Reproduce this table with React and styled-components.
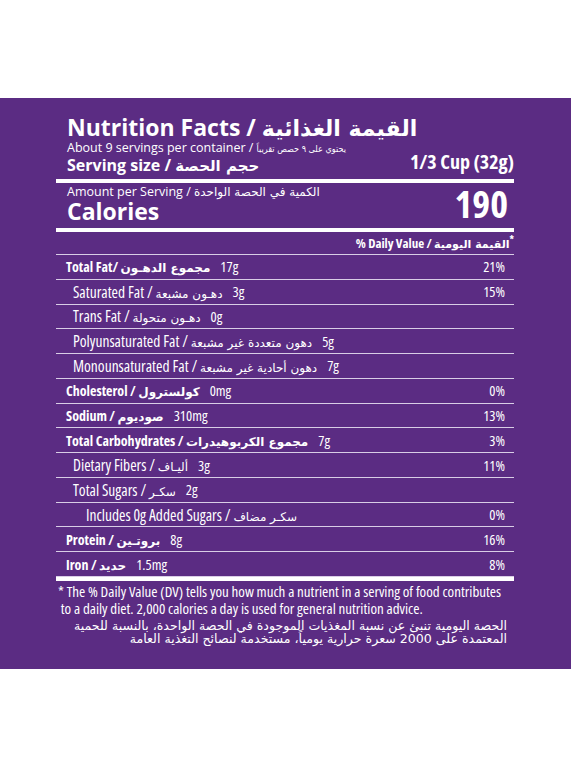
import styled, { createGlobalStyle } from "styled-components";

const GlobalStyle = createGlobalStyle`
  body {
    margin: 0;
    background: #ffffff;
  }
`;

const SANS = `"Open Sans", "Liberation Sans", sans-serif`;
const ARABIC = `"DejaVu Sans", sans-serif`;
const ARABIC_NARROW = `"DejaVu Sans Condensed", "DejaVu Sans", sans-serif`;

//---------- data --------
const rows = [
  { en: "Total Fat", ar: "مجموع الدهـون", amount: "17g", dv: "21%", bold: true, level: 0, tight: true },
  { en: "Saturated Fat", ar: "دهـون مشبعة", amount: "3g", dv: "15%", level: 1 },
  { en: "Trans Fat", ar: "دهـون متحولة", amount: "0g", level: 1 },
  { en: "Polyunsaturated Fat", ar: "دهون متعددة غير مشبعة", amount: "5g", level: 1 },
  { en: "Monounsaturated Fat", ar: "دهون أحادية غير مشبعة", amount: "7g", level: 1 },
  { en: "Cholesterol", ar: "كولسترول", amount: "0mg", dv: "0%", bold: true, level: 0 },
  { en: "Sodium", ar: "صوديوم", amount: "310mg", dv: "13%", bold: true, level: 0 },
  { en: "Total Carbohydrates", ar: "مجموع الكربوهيدرات", amount: "7g", dv: "3%", bold: true, level: 0 },
  { en: "Dietary Fibers", ar: "أليـاف", amount: "3g", dv: "11%", level: 1 },
  { en: "Total Sugars", ar: "سكـر", amount: "2g", level: 1 },
  { en: "Includes 0g Added Sugars", ar: "سكـر مضاف", dv: "0%", level: 2 },
  { en: "Protein", ar: "بروتـين", amount: "8g", dv: "16%", bold: true, level: 0 },
  { en: "Iron", ar: "حديد", amount: "1.5mg", dv: "8%", bold: true, level: 0 },
];

const indent = [10, 17, 30];

const App = () => {
  return (
    <>
      <GlobalStyle />
      <Panel>
        <Label>
          <Title>
            Nutrition Facts / <Ar $size={22}>القيمة الغذائية</Ar>
          </Title>
          <Serving>
            <div>
              <Small>
                About 9 servings per container /{" "}
                <Ar $size={9} $narrow>
                  يحتوي على ٩ حصص تقريباً
                </Ar>
              </Small>
              <ServingSize>
                Serving size / <Ar $size={15}>حجم الحصة</Ar>
              </ServingSize>
            </div>
            <CupSize>1/3 Cup (32g)</CupSize>
          </Serving>
          <ThickRule />
          <CaloriesBlock>
            <div>
              <Small>
                Amount per Serving / <Ar $size={12}>الكمية في الحصة الواحدة</Ar>
              </Small>
              <CaloriesLabel>Calories</CaloriesLabel>
            </div>
            <CaloriesValue>190</CaloriesValue>
          </CaloriesBlock>
          <ThickRule />
          <DailyHead>
            % Daily Value / <Ar $size={11}>القيمة اليومية</Ar>
            <sup>*</sup>
          </DailyHead>
          {rows.map((r) => (
            <Row key={r.en} $pad={indent[r.level]}>
              <Name $bold={r.bold}>
                {r.en}
                {r.tight ? "/ " : " / "}
                <Ar $size={12}>{r.ar}</Ar>
              </Name>
              {r.amount && <Amount>{r.amount}</Amount>}
              <Percent>{r.dv}</Percent>
            </Row>
          ))}
          <ThickRule />
          <Footnote>
            * The % Daily Value (DV) tells you how much a nutrient in a serving of food contributes
            <br />
            &nbsp;to a daily diet. 2,000 calories a day is used for general nutrition advice.
          </Footnote>
          <ArabicNote dir="rtl">
            الحصة اليومية تنبئ عن نسبة المغذيات الموجودة في الحصة الواحدة، بالنسبة للحمية
            <br />
            المعتمدة على 2000 سعرة حرارية يومياً، مستخدمة لنصائح التغذية العامة
          </ArabicNote>
        </Label>
      </Panel>
    </>
  );
};

const Panel = styled.section`
  margin-top: 98px;
  height: 571px;
  box-sizing: border-box;
  padding-top: 16px;
  background: #5b2c83;
  color: #ffffff;
`;
const Label = styled.div`
  width: 458px;
  margin-left: 56px;
`;
const Ar = styled.span`
  font-family: ${(p) => (p.$narrow ? ARABIC_NARROW : ARABIC)};
  font-size: ${(p) => p.$size}px;
  font-stretch: normal;
  line-height: 0;
  unicode-bidi: isolate;
  direction: rtl;
`;
const Title = styled.h1`
  margin: 0;
  padding-left: 11px;
  font-family: ${SANS};
  font-size: 23px;
  font-weight: 700;
  line-height: 26px;
  white-space: nowrap;
`;
const Serving = styled.div`
  display: flex;
  justify-content: space-between;
  align-items: flex-end;
  padding-left: 11px;
  margin-bottom: 4px;
`;
const Small = styled.div`
  font-family: ${SANS};
  font-size: 12.5px;
  line-height: 15px;
  white-space: nowrap;
`;
const ServingSize = styled.div`
  font-family: ${SANS};
  font-size: 16px;
  font-weight: 700;
  line-height: 20px;
  white-space: nowrap;
`;
const CupSize = styled.div`
  font-family: ${SANS};
  font-stretch: 75%;
  font-size: 20px;
  font-weight: 700;
  line-height: 22px;
  margin-bottom: 2px;
  white-space: nowrap;
`;
const ThickRule = styled.div`
  height: 4px;
  background: #ffffff;
`;
const CaloriesBlock = styled.div`
  display: flex;
  justify-content: space-between;
  align-items: flex-end;
  padding: 1px 6px 5px 11px;
`;
const CaloriesLabel = styled.div`
  font-family: ${SANS};
  font-size: 23px;
  font-weight: 700;
  line-height: 24px;
`;
const CaloriesValue = styled.div`
  font-family: ${SANS};
  font-stretch: 75%;
  font-size: 38px;
  font-weight: 700;
  line-height: 30px;
  margin-bottom: 5px;
`;
const DailyHead = styled.div`
  height: 23px;
  box-sizing: border-box;
  padding-top: 3px;
  text-align: right;
  font-family: ${SANS};
  font-stretch: 75%;
  font-size: 13px;
  font-weight: 700;
  line-height: 16px;
  border-bottom: 1px solid #d9cde6;
  sup {
    font-size: 10px;
    line-height: 0;
  }
`;
const Row = styled.div`
  display: flex;
  align-items: center;
  height: 24.77px;
  box-sizing: border-box;
  padding: 0 9px 0 ${(p) => p.$pad}px;
  font-family: ${SANS};
  font-size: 14.5px;
  font-stretch: 75%;
  white-space: nowrap;
  border-bottom: 1px solid #d9cde6;
  &:last-of-type {
    border-bottom: none;
  }
`;
const Name = styled.span`
  font-weight: ${(p) => (p.$bold ? 700 : 400)};
  font-size: ${(p) => (p.$bold ? 14 : 15.5)}px;
`;
const Amount = styled.span`
  margin-left: 10px;
`;
const Percent = styled.span`
  margin-left: auto;
`;
const Footnote = styled.p`
  margin: 2px 0 0 2px;
  font-family: ${SANS};
  font-stretch: 75%;
  font-size: 15px;
  line-height: 17.4px;
  white-space: nowrap;
`;
const ArabicNote = styled.p`
  margin: 1px 7px 0 0;
  font-family: ${ARABIC};
  font-size: 12.6px;
  line-height: 13.5px;
  white-space: nowrap;
`;

export default App;
